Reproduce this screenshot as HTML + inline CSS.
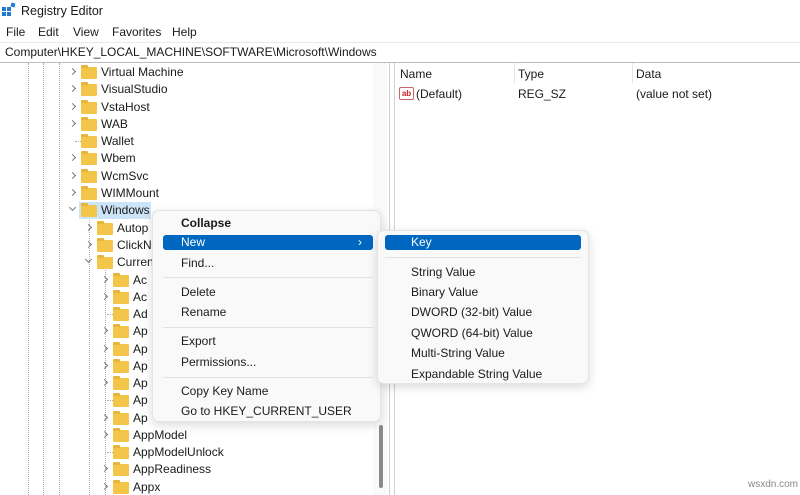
<!DOCTYPE html>
<html><head><meta charset="utf-8"><style>
*{margin:0;padding:0;box-sizing:border-box}
body{width:800px;height:495px;overflow:hidden;background:#fff;font-family:"Liberation Sans",sans-serif;font-size:12px;color:#1a1a1a;position:relative}
.a{position:absolute;white-space:nowrap;line-height:14px}
.f{position:absolute;width:16px;height:12px;background:#f3c64a;border-radius:1px}
.f:before{content:"";position:absolute;left:0;top:-2px;width:7px;height:3px;background:#e6b53a;border-radius:1px 1px 0 0}
.c{position:absolute;width:5px;height:5px;border-right:1px solid #777;border-bottom:1px solid #777;transform:rotate(-45deg)}
.d{position:absolute;width:5px;height:5px;border-right:1px solid #777;border-bottom:1px solid #777;transform:rotate(45deg)}
.v{position:absolute;border-left:1px dotted #aaa}
.h{position:absolute;border-top:1px dotted #aaa;width:6px}
.sep{position:absolute;height:1px;background:#e2e2e2}
</style></head><body>
<!-- title -->
<div style="position:absolute;left:2px;top:3px;width:14px;height:14px">
<div style="position:absolute;left:0;top:4px;width:4px;height:4px;background:#1f7ad4"></div>
<div style="position:absolute;left:5px;top:4px;width:4px;height:4px;background:#1f7ad4"></div>
<div style="position:absolute;left:0;top:9px;width:4px;height:4px;background:#1f7ad4"></div>
<div style="position:absolute;left:5px;top:9px;width:4px;height:4px;background:#1f7ad4"></div>
<div style="position:absolute;left:9px;top:0;width:4px;height:4px;background:#1f7ad4;transform:rotate(15deg)"></div>
</div>
<div class="a" style="left:21px;top:4px;font-size:12.5px">Registry Editor</div>
<div class="a" style="left:6px;top:25px">File</div>
<div class="a" style="left:38px;top:25px">Edit</div>
<div class="a" style="left:73px;top:25px">View</div>
<div class="a" style="left:112px;top:25px">Favorites</div>
<div class="a" style="left:172px;top:25px">Help</div>
<div style="position:absolute;left:0;top:42px;width:800px;height:1px;background:#e8e8e8"></div>
<div class="a" style="left:5px;top:45px">Computer\HKEY_LOCAL_MACHINE\SOFTWARE\Microsoft\Windows</div>
<div style="position:absolute;left:0;top:62px;width:800px;height:1px;background:#bdbdbd"></div>
<!-- dividers & scrollbar -->
<div style="position:absolute;left:373px;top:63px;width:14px;height:432px;background:#fafafa"></div>
<div style="position:absolute;left:379px;top:425px;width:4px;height:63px;background:#8a8a8a;border-radius:2px"></div>
<div style="position:absolute;left:389px;top:63px;width:1px;height:432px;background:#d0d0d0"></div>
<div style="position:absolute;left:394px;top:63px;width:1px;height:432px;background:#d0d0d0"></div>
<!-- dotted guides -->
<div class="v" style="left:28px;top:63px;height:432px"></div>
<div class="v" style="left:43px;top:63px;height:432px"></div>
<div class="v" style="left:59px;top:63px;height:432px"></div>
<div class="v" style="left:89px;top:218px;height:277px"></div>
<div class="v" style="left:105px;top:270px;height:225px"></div>
<div class="h" style="left:75px;top:141px"></div>
<div class="h" style="left:107px;top:314px"></div>
<div class="h" style="left:107px;top:400px"></div>
<div class="h" style="left:107px;top:452px"></div>
<!-- tree rows -->
<div style="position:absolute;left:79px;top:202px;width:72px;height:17px;background:#cce4f7"></div>
<div class="c" style="left:70px;top:69px"></div><div class="f" style="left:81px;top:67px"></div><div class="a" style="left:101px;top:65px">Virtual Machine</div>
<div class="c" style="left:70px;top:86px"></div><div class="f" style="left:81px;top:84px"></div><div class="a" style="left:101px;top:82px">VisualStudio</div>
<div class="c" style="left:70px;top:104px"></div><div class="f" style="left:81px;top:102px"></div><div class="a" style="left:101px;top:100px">VstaHost</div>
<div class="c" style="left:70px;top:121px"></div><div class="f" style="left:81px;top:119px"></div><div class="a" style="left:101px;top:117px">WAB</div>
<div class="f" style="left:81px;top:136px"></div><div class="a" style="left:101px;top:134px">Wallet</div>
<div class="c" style="left:70px;top:155px"></div><div class="f" style="left:81px;top:153px"></div><div class="a" style="left:101px;top:151px">Wbem</div>
<div class="c" style="left:70px;top:173px"></div><div class="f" style="left:81px;top:171px"></div><div class="a" style="left:101px;top:169px">WcmSvc</div>
<div class="c" style="left:70px;top:190px"></div><div class="f" style="left:81px;top:188px"></div><div class="a" style="left:101px;top:186px">WIMMount</div>
<div class="d" style="left:70px;top:205px"></div><div class="f" style="left:81px;top:205px"></div><div class="a" style="left:101px;top:203px">Windows</div>
<div class="c" style="left:86px;top:225px"></div><div class="f" style="left:97px;top:223px"></div><div class="a" style="left:117px;top:221px">Autop</div>
<div class="c" style="left:86px;top:242px"></div><div class="f" style="left:97px;top:240px"></div><div class="a" style="left:117px;top:238px">ClickN</div>
<div class="d" style="left:86px;top:257px"></div><div class="f" style="left:97px;top:257px"></div><div class="a" style="left:117px;top:255px">Curren</div>
<div class="c" style="left:102px;top:277px"></div><div class="f" style="left:113px;top:275px"></div><div class="a" style="left:133px;top:273px">Ac</div>
<div class="c" style="left:102px;top:294px"></div><div class="f" style="left:113px;top:292px"></div><div class="a" style="left:133px;top:290px">Ac</div>
<div class="f" style="left:113px;top:309px"></div><div class="a" style="left:133px;top:307px">Ad</div>
<div class="c" style="left:102px;top:328px"></div><div class="f" style="left:113px;top:326px"></div><div class="a" style="left:133px;top:324px">Ap</div>
<div class="c" style="left:102px;top:346px"></div><div class="f" style="left:113px;top:344px"></div><div class="a" style="left:133px;top:342px">Ap</div>
<div class="c" style="left:102px;top:363px"></div><div class="f" style="left:113px;top:361px"></div><div class="a" style="left:133px;top:359px">Ap</div>
<div class="c" style="left:102px;top:380px"></div><div class="f" style="left:113px;top:378px"></div><div class="a" style="left:133px;top:376px">Ap</div>
<div class="f" style="left:113px;top:395px"></div><div class="a" style="left:133px;top:393px">Ap</div>
<div class="c" style="left:102px;top:415px"></div><div class="f" style="left:113px;top:413px"></div><div class="a" style="left:133px;top:411px">Ap</div>
<div class="c" style="left:102px;top:432px"></div><div class="f" style="left:113px;top:430px"></div><div class="a" style="left:133px;top:428px">AppModel</div>
<div class="f" style="left:113px;top:447px"></div><div class="a" style="left:133px;top:445px">AppModelUnlock</div>
<div class="c" style="left:102px;top:466px"></div><div class="f" style="left:113px;top:464px"></div><div class="a" style="left:133px;top:462px">AppReadiness</div>
<div class="c" style="left:102px;top:484px"></div><div class="f" style="left:113px;top:482px"></div><div class="a" style="left:133px;top:480px">Appx</div>
<!-- right pane -->
<div class="a" style="left:400px;top:67px">Name</div>
<div class="a" style="left:518px;top:67px">Type</div>
<div class="a" style="left:636px;top:67px">Data</div>
<div style="position:absolute;left:514px;top:63px;width:1px;height:20px;background:#e5e5e5"></div>
<div style="position:absolute;left:632px;top:63px;width:1px;height:20px;background:#e5e5e5"></div>
<div style="position:absolute;left:399px;top:87px;width:15px;height:13px;border:1px solid #c66;border-radius:2px;background:#fff;font-size:8px;color:#c22;line-height:11px;text-align:center;font-weight:bold">ab</div>
<div class="a" style="left:416px;top:87px">(Default)</div>
<div class="a" style="left:518px;top:87px">REG_SZ</div>
<div class="a" style="left:636px;top:87px">(value not set)</div>
<!-- context menu -->
<div style="position:absolute;left:152px;top:210px;width:229px;height:212px;background:#f9f9f9;border:1px solid #e4e4e4;border-radius:7px;box-shadow:0 3px 10px rgba(0,0,0,.15)"></div>
<div class="a" style="left:181px;top:216px;font-weight:bold">Collapse</div>
<div style="position:absolute;left:163px;top:235px;width:210px;height:15px;background:#0067c0;border-radius:3px"></div>
<div class="a" style="left:181px;top:235px;color:#fff">New</div>
<div class="a" style="left:358px;top:235px;color:#fff">›</div>
<div class="a" style="left:181px;top:256px">Find...</div>
<div class="sep" style="left:163px;top:277px;width:210px"></div>
<div class="a" style="left:181px;top:285px">Delete</div>
<div class="a" style="left:181px;top:305px">Rename</div>
<div class="sep" style="left:163px;top:327px;width:210px"></div>
<div class="a" style="left:181px;top:334px">Export</div>
<div class="a" style="left:181px;top:355px">Permissions...</div>
<div class="sep" style="left:163px;top:377px;width:210px"></div>
<div class="a" style="left:181px;top:384px">Copy Key Name</div>
<div class="a" style="left:181px;top:404px">Go to HKEY_CURRENT_USER</div>
<!-- submenu -->
<div style="position:absolute;left:377px;top:230px;width:212px;height:154px;background:#f9f9f9;border:1px solid #e4e4e4;border-radius:7px;box-shadow:0 3px 10px rgba(0,0,0,.15)"></div>
<div style="position:absolute;left:385px;top:235px;width:196px;height:15px;background:#0067c0;border-radius:3px"></div>
<div class="a" style="left:411px;top:235px;color:#fff">Key</div>
<div class="sep" style="left:385px;top:257px;width:196px"></div>
<div class="a" style="left:411px;top:265px">String Value</div>
<div class="a" style="left:411px;top:285px">Binary Value</div>
<div class="a" style="left:411px;top:305px">DWORD (32-bit) Value</div>
<div class="a" style="left:411px;top:326px">QWORD (64-bit) Value</div>
<div class="a" style="left:411px;top:346px">Multi-String Value</div>
<div class="a" style="left:411px;top:367px">Expandable String Value</div>
<div class="a" style="left:748px;top:478px;font-size:10px;color:#888">wsxdn.com</div>
</body></html>
